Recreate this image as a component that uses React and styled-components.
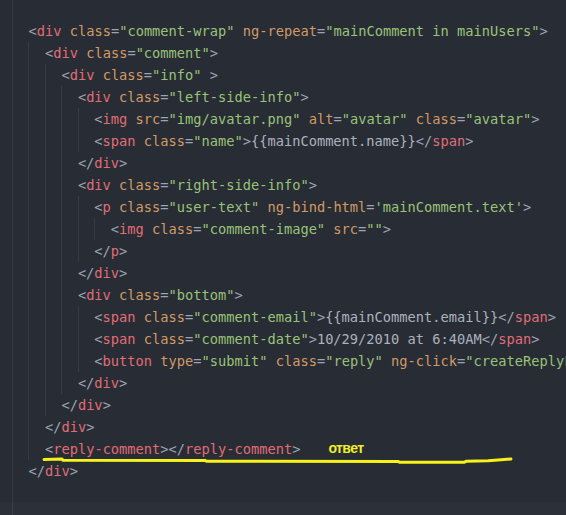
import React from 'react';
import styled, { createGlobalStyle } from 'styled-components';

const GlobalStyle = createGlobalStyle`
  html, body {
    margin: 0;
    padding: 0;
    background: #282c34;
  }
`;

// code lines: indent in spaces from column 0
const lines = [
  [2, `<div class="comment-wrap" ng-repeat="mainComment in mainUsers">`],
  [4, `<div class="comment">`],
  [6, `<div class="info" >`],
  [8, `<div class="left-side-info">`],
  [10, `<img src="img/avatar.png" alt="avatar" class="avatar">`],
  [10, `<span class="name">{{mainComment.name}}</span>`],
  [8, `</div>`],
  [8, `<div class="right-side-info">`],
  [10, `<p class="user-text" ng-bind-html='mainComment.text'>`],
  [12, `<img class="comment-image" src="">`],
  [10, `</p>`],
  [8, `</div>`],
  [8, `<div class="bottom">`],
  [10, `<span class="comment-email">{{mainComment.email}}</span>`],
  [10, `<span class="comment-date">10/29/2010 at 6:40AM</span>`],
  [10, `<button type="submit" class="reply" ng-click="createReplyF">`],
  [8, `</div>`],
  [6, `</div>`],
  [4, `</div>`],
  [4, `<reply-comment></reply-comment>`, 'ответ'],
  [2, `</div>`]
];

const TOKEN_RE = /(<\/?)([\w-]+)|([\w-]+)(?==)|(=)|("[^"]*"|'[^']*')|(\/?>)|([^<>="'\s]+|\s+)/g;

const tokenize = src => {
  const out = [];
  let m;
  TOKEN_RE.lastIndex = 0;
  while ((m = TOKEN_RE.exec(src))) {
    if (m[1]) {
      out.push({ kind: 'punct', text: m[1] });
      out.push({ kind: 'tag', text: m[2] });
    } else if (m[3]) out.push({ kind: 'attr', text: m[3] });
    else if (m[4]) out.push({ kind: 'punct', text: m[4] });
    else if (m[5]) out.push({ kind: 'string', text: m[5] });
    else if (m[6]) out.push({ kind: 'punct', text: m[6] });
    else out.push({ kind: 'text', text: m[7] });
  }
  return out;
};

const App = () => (
  <SCPage>
    <GlobalStyle />
    <SCEditor>
      <SCCode>
        {lines.map(([indent, src, note], i) => (
          <SCLine key={i}>
            <SCIndent />
            {Array.from({ length: indent / 2 - 1 }).map((_, g) => (
              <SCGuide key={g} />
            ))}
            {tokenize(src).map((t, k) => (
              <SCToken key={k} kind={t.kind}>
                {t.text}
              </SCToken>
            ))}
            {note && <SCNote>{note}</SCNote>}
          </SCLine>
        ))}
      </SCCode>
    </SCEditor>
    <SCStatusBand>
      <SCBandGuide />
    </SCStatusBand>
    <SCScribble width="566" height="515" viewBox="0 0 566 515">
      <path
        d="M44 459.5 L62 459 L63 460.3 L205 460.5 L207 461.3 L398 461.5 L400 462.3 L464 462.3 L466 461.3 L488 460.8 L498 460 L511 459"
        fill="none"
        stroke="#f6f31a"
        strokeWidth="3"
        strokeLinecap="round"
        strokeLinejoin="round"
      />
    </SCScribble>
  </SCPage>
);

const colors = {
  punct: '#9da5b4',
  tag: '#e06c75',
  attr: '#d19a66',
  string: '#98c379',
  text: '#abb2bf'
};

const SCPage = styled.div`
  position: relative;
  width: 566px;
  height: 515px;
  display: flex;
  flex-direction: column;
  background: #282c34;
  overflow: hidden;
`;

const SCEditor = styled.div`
  flex: 1;
  display: flex;
  padding-left: 12px;
  min-width: 0;
`;

const SCCode = styled.div`
  flex: 1;
  min-width: 0;
  display: flex;
  flex-direction: column;
  padding-top: 20px;
  border-left: 1px solid #343a44;
  font-family: 'DejaVu Sans Mono', 'Liberation Mono', monospace;
  font-size: 13.7px;
  overflow: hidden;
`;

const SCLine = styled.div`
  display: flex;
  align-items: stretch;
  height: 22px;
  line-height: 22px;
  white-space: pre;
  margin-left: -1px;
`;

const SCIndent = styled.span`
  flex: 0 0 2ch;
`;

const SCGuide = styled.span`
  flex: 0 0 2ch;
  box-sizing: border-box;
  border-left: 1px solid #353a44;
`;

const SCToken = styled.span`
  color: ${p => colors[p.kind]};
`;

const SCNote = styled.span`
  margin-left: 28px;
  color: #eeee28;
  font-family: 'Liberation Sans', Arial, sans-serif;
  font-weight: bold;
  font-size: 14px;
  letter-spacing: -0.6px;
  line-height: 20px;
`;

const SCStatusBand = styled.div`
  height: 13px;
  flex: 0 0 13px;
  padding-left: 12px;
  background: #2c3039;
  display: flex;
`;

const SCBandGuide = styled.div`
  border-left: 1px solid #3a3f49;
`;

const SCScribble = styled.svg`
  position: absolute;
  top: 0;
  left: 0;
  pointer-events: none;
`;

export default App;
